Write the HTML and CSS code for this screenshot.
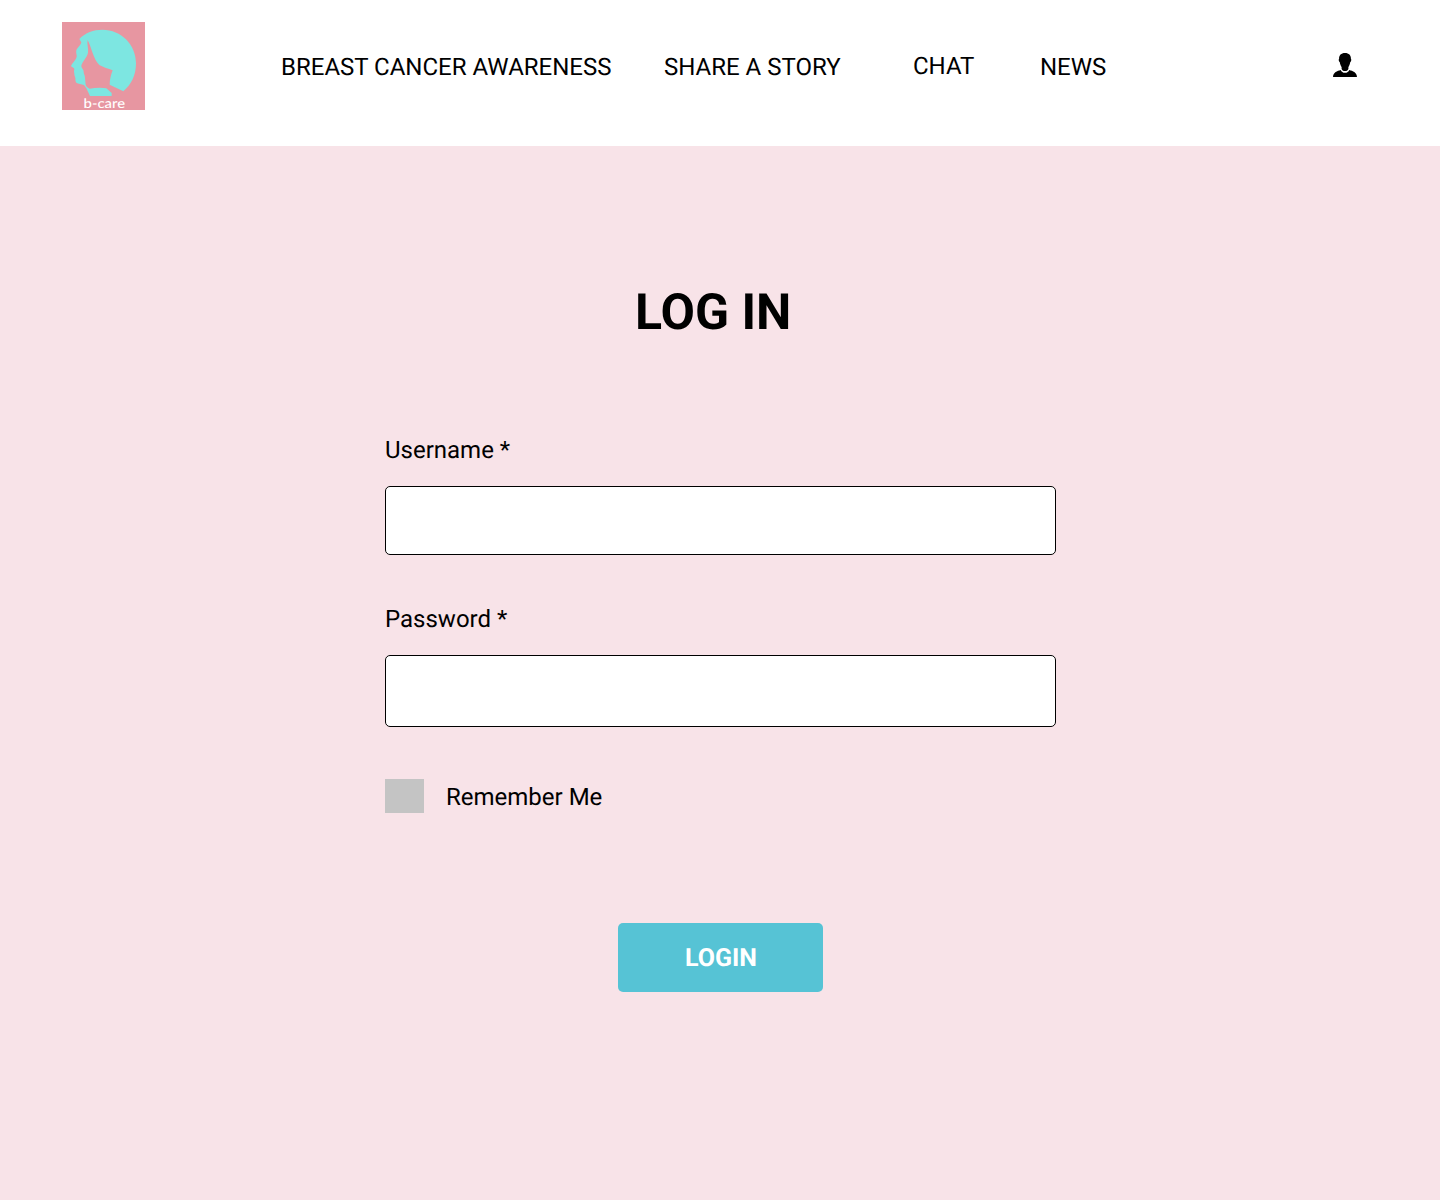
FILE: index.html
```html
<!DOCTYPE html>
<html lang="en">
<head>
<meta charset="utf-8">
<title>b-care – Log in</title>
<link rel="stylesheet" href="styles.css">
</head>
<body>
<header class="header">
  <a class="logo">
    <svg viewBox="18 18 249 264" width="83" height="88" preserveAspectRatio="none">
      <rect x="18" y="18" width="249" height="264" fill="#e796a1"/>
      <path fill="#7de6e1" d="M70 69C88 50 113 41 139 41C196 41 240 86 240 142C240 178 226 206 202 226L161 206C161 191 165 176 170 163C157 158 142 154 130 147C112 130 107 95 95 72C92 84 98 98 96 110C92 126 80 135 76 149C76 157 84 160 83 168C83 174 87 178 87 185L89 207C91 213 96 216 101 218C118 215 136 214 151 217L167 231V240H102L91 217L84 207C76 204 67 204 61 200C56 194 60 188 57 182C54 178 56 173 54 168C53 163 57 161 54 157L45 151C47 142 60 132 62 122C63 116 59 112 61 103C64 94 75 88 76 79Z"/>
      <text class="logo-text" x="145" y="277" text-anchor="middle" textLength="125" lengthAdjust="spacingAndGlyphs">b-care</text>
    </svg>
  </a>
  <nav class="nav">
    <a class="nav-awareness">BREAST CANCER AWARENESS</a>
    <a class="nav-story">SHARE A STORY</a>
    <a class="nav-chat">CHAT</a>
    <a class="nav-news">NEWS</a>
  </nav>
  <a class="account">
    <svg viewBox="0 0 24 24" width="24" height="24">
      <path d="M12 0C8.100 0 5.900 2.400 6.100 5.800C5.300 6.300 5.800 8.700 6.800 9.300C7.100 11.500 7.900 13 8.600 14.100V16C9.300 17.600 10.600 18.100 12 18.100S14.700 17.600 15.400 16V14.100C16.100 13 16.900 11.500 17.200 9.300C18.200 8.700 18.700 6.300 17.900 5.800C18.100 2.400 15.900 0 12 0Z"/>
      <path d="M7.700 17C4.200 18 .3 19.200 0 24H24C23.700 19.200 19.800 18 16.300 17C15.500 18.900 14.200 19.800 12 19.800S8.500 18.900 7.700 17Z"/>
    </svg>
  </a>
</header>
<main class="main">
  <h1 class="title">LOG IN</h1>
  <form class="form">
    <label class="label" for="username">Username *</label>
    <input class="input input-username" id="username" type="text">
    <label class="label" for="password">Password *</label>
    <input class="input input-password" id="password" type="password">
    <div class="remember">
      <input class="checkbox" id="remember" type="checkbox">
      <label for="remember">Remember Me</label>
    </div>
    <button class="submit" type="button">LOGIN</button>
  </form>
</main>
</body>
</html>
```

FILE: styles.css
```css
* {
  box-sizing: border-box;
}

body {
  margin: 0;
  min-height: 1200px;
  background: #f8e3e8;
  color: #000;
  font: 24px/28px Roboto, sans-serif;
  text-rendering: geometricPrecision;
}

.header {
  display: flex;
  align-items: flex-start;
  height: 146px;
  padding: 22px 83px 0 62px;
  background: #fff;
}

.logo,
.logo svg,
.account svg {
  display: block;
}

.logo-text {
  fill: #fff;
  font: 500 40px Lato, sans-serif;
}

.nav {
  display: flex;
  margin: 31px 0 0 136px;
  white-space: nowrap;
}

.nav-awareness {
  width: 383px;
}

.nav-story {
  width: 249px;
}

.nav-chat {
  width: 127px;
  margin-top: -1px;
}

.account {
  margin: 31px 0 0 auto;
}

.main {
  width: 671px;
  margin: 0 auto 0 385px;
  padding-top: 138px;
}

.title {
  margin: 0 0 93px 250px;
  font-size: 50px;
  line-height: 59px;
}

.form {
  display: flex;
  flex-direction: column;
}

.input {
  width: 100%;
  margin: 22px 0 50px;
  padding: 0 16px;
  border: 1px solid #000;
  border-radius: 5px;
  background: #fff;
  font: inherit;
}

.input-username {
  height: 69px;
}

.input-password {
  height: 72px;
  margin-bottom: 52px;
}

.remember {
  display: flex;
  gap: 22px;
  height: 34px;
}

.remember label {
  margin-top: 4px;
}

.checkbox {
  appearance: none;
  width: 39px;
  height: 34px;
  margin: 0;
  background: #c4c4c4;
}

.submit {
  align-self: center;
  width: 205px;
  height: 69px;
  margin-top: 110px;
  padding: 2px 0 0 1px;
  border: 0;
  border-radius: 5px;
  background: #56c3d5;
  color: #fff;
  font: bold 25px/29px Roboto, sans-serif;
  text-rendering: inherit;
}
```
